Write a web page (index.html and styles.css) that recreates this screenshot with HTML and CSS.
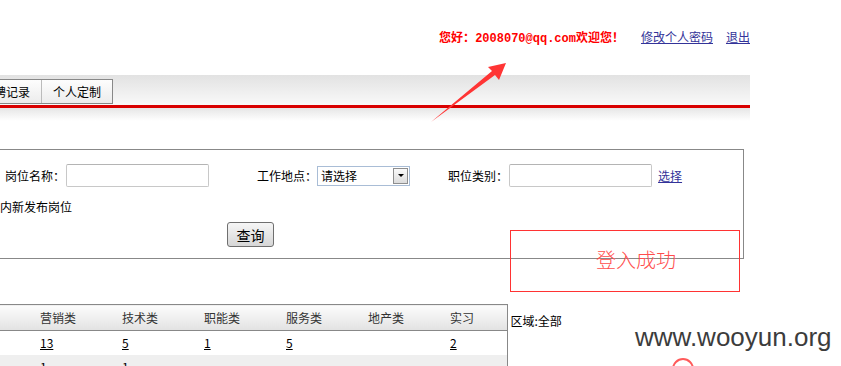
FILE: index.html
```html
<!DOCTYPE html>
<html lang="zh-CN">
<head>
    <meta charset="UTF-8">
    <title>个人中心</title>
    <link rel="stylesheet" href="styles.css">
</head>
<body>
    <div class="page">
        <div class="top">
            <span class="welcome">您好：<span class="mail">2008070@qq.com</span>欢迎您！</span>
            <a href="#" class="top-link">修改个人密码</a>
            <a href="#" class="top-link">退出</a>
        </div>
        <div class="nav">
            <ul class="tabs">
                <li>应聘记录</li>
                <li>个人定制</li>
            </ul>
        </div>
        <div class="nav-fade"></div>

        <div class="search">
            <div class="search-row">
                <label>岗位名称：</label>
                <input type="text" class="field">
                <label class="gap-place">工作地点：</label>
                <div class="select"><span>请选择</span><span class="select-btn"><i></i></span></div>
                <label class="gap-type">职位类别：</label>
                <input type="text" class="field">
                <a href="#" class="pick">选择</a>
            </div>
            <div class="search-new">一周内新发布岗位</div>
            <div class="search-actions"><button>查询</button></div>
        </div>

        <div class="stats">
            <table class="stats-table">
                <colgroup>
                    <col style="width:100px"><col style="width:82px"><col style="width:82px"><col style="width:82px"><col style="width:82px"><col style="width:82px"><col style="width:57px">
                </colgroup>
                <tr class="head">
                    <th>分类</th><th>营销类</th><th>技术类</th><th>职能类</th><th>服务类</th><th>地产类</th><th>实习</th>
                </tr>
                <tr>
                    <td>全部</td><td><a href="#">13</a></td><td><a href="#">5</a></td><td><a href="#">1</a></td><td><a href="#">5</a></td><td></td><td><a href="#">2</a></td>
                </tr>
                <tr class="alt">
                    <td>本地</td><td><a href="#">1</a></td><td><a href="#">1</a></td><td></td><td></td><td></td><td></td>
                </tr>
            </table>
            <div class="area">区域:全部</div>
        </div>
    </div>

    <div class="toast">登入成功</div>
    <div class="watermark">www.wooyun.org</div>
    <svg class="mark" width="841" height="366" viewBox="0 0 841 366">
        <polygon points="506,63 488,67 492,71 431,122 495,75 499,80" fill="#ff3535"/>
        <circle cx="683" cy="369" r="10" fill="none" stroke="#ff5a5a" stroke-width="2"/>
    </svg>
</body>
</html>
```

FILE: styles.css
```css
body {
    margin: 0;
    position: relative;
    height: 366px;
    overflow: hidden;
    font-family: "Noto Sans CJK SC", sans-serif;
    font-size: 12px;
    line-height: 14px;
    color: #000;
    background-color: #fff;
}
.page {
    width: 750px;
}
.top {
    height: 75px;
    box-sizing: border-box;
    padding-top: 30px;
    display: flex;
    justify-content: flex-end;
}
.welcome {
    color: #f00;
    font-weight: bold;
    margin-right: 17px;
}
.mail {
    font-family: "Liberation Mono", monospace;
}
.top-link {
    color: #333399;
}
.top-link + .top-link {
    margin-left: 13px;
}
.nav {
    box-sizing: border-box;
    padding-top: 4px;
    background: linear-gradient(#e2e2e2, #f9f9f9);
    border-bottom: 3px solid #d90000;
    height: 33px;
}
.tabs {
    list-style: none;
    margin: 0 0 0 -30px;
    padding: 0;
    display: flex;
    width: max-content;
    border: 1px solid #888;
    background: linear-gradient(#fdfdfd, #ececec);
}
.tabs li {
    padding: 0 11px;
    line-height: 23px;
}
.tabs li + li {
    border-left: 1px solid #bbb;
}
.nav-fade {
    height: 13px;
    background: linear-gradient(#e6e6e6, #fff);
}
.search {
    margin: 28px 0 0 -10px;
    width: 754px;
    box-sizing: border-box;
    border: 1px solid #888;
    padding: 14px 0 11px 14px;
}
.search-row {
    display: flex;
    align-items: center;
    height: 23px;
}
.field {
    width: 143px;
    height: 23px;
    box-sizing: border-box;
    margin: 0 0 0 1px;
    border: 1px solid #c8c8c8;
    border-top-color: #b4b4b4;
    border-radius: 2px;
}
.gap-place {
    margin-left: 48px;
}
.gap-type {
    margin-left: 38px;
}
.select {
    width: 93px;
    height: 20px;
    box-sizing: border-box;
    border: 1px solid #a9bdd6;
    display: flex;
    align-items: center;
    justify-content: space-between;
    padding: 0 1px 0 3px;
}
.select-btn {
    width: 15px;
    height: 16px;
    box-sizing: border-box;
    border: 1px solid #8e8e8e;
    background: linear-gradient(#fafafa, #dcdcdc);
    display: flex;
    align-items: center;
    justify-content: center;
}
.select-btn i {
    border-left: 3px solid transparent;
    border-right: 3px solid transparent;
    border-top: 3px solid #000;
}
.pick {
    margin-left: 6px;
    color: #333399;
}
.search-new {
    margin: 13px 0 0 -29px;
}
.search-actions {
    margin: 8px 0 0 222px;
}
.search-actions button {
    width: 47px;
    height: 25px;
    padding: 0;
    border: 1px solid #6f6f6f;
    border-radius: 3px;
    background: linear-gradient(#f6f6f6, #d6d6d6);
    font-family: "Noto Sans CJK SC", sans-serif;
    font-size: 14px;
    color: #000;
}
.stats {
    margin-top: 45px;
    display: flex;
    align-items: flex-start;
}
.stats-table {
    margin-left: -60px;
    width: 567px;
    table-layout: fixed;
    border-collapse: collapse;
    border-top: 1px solid #888;
    border-right: 1px solid #888;
}
.stats-table th,
.stats-table td {
    padding: 0;
    text-align: left;
    font-weight: normal;
    color: #333;
}
.stats-table th:first-child,
.stats-table td:first-child {
    padding-left: 6px;
}
.stats-table .head th {
    height: 25px;
    background: linear-gradient(#fcfcfc, #e2e2e2);
    border-bottom: 1px solid #888;
}
.stats-table td {
    height: 24px;
}
.stats-table .alt td {
    background-color: #efefef;
}
.stats-table a {
    color: #000;
}
.area {
    margin: 10px 0 0 3px;
}
.toast {
    position: absolute;
    left: 510px;
    top: 230px;
    width: 230px;
    height: 62px;
    box-sizing: border-box;
    border: 1px solid #ff3333;
    padding-left: 85px;
    line-height: 58px;
    font-size: 20px;
    font-weight: 300;
    color: #ff4d4d;
}
.watermark {
    position: absolute;
    left: 635px;
    top: 324px;
    font-family: "Liberation Sans", sans-serif;
    font-size: 26px;
    line-height: 26px;
    color: #3c3c3c;
}
.mark {
    position: absolute;
    left: 0;
    top: 0;
    pointer-events: none;
}
```
